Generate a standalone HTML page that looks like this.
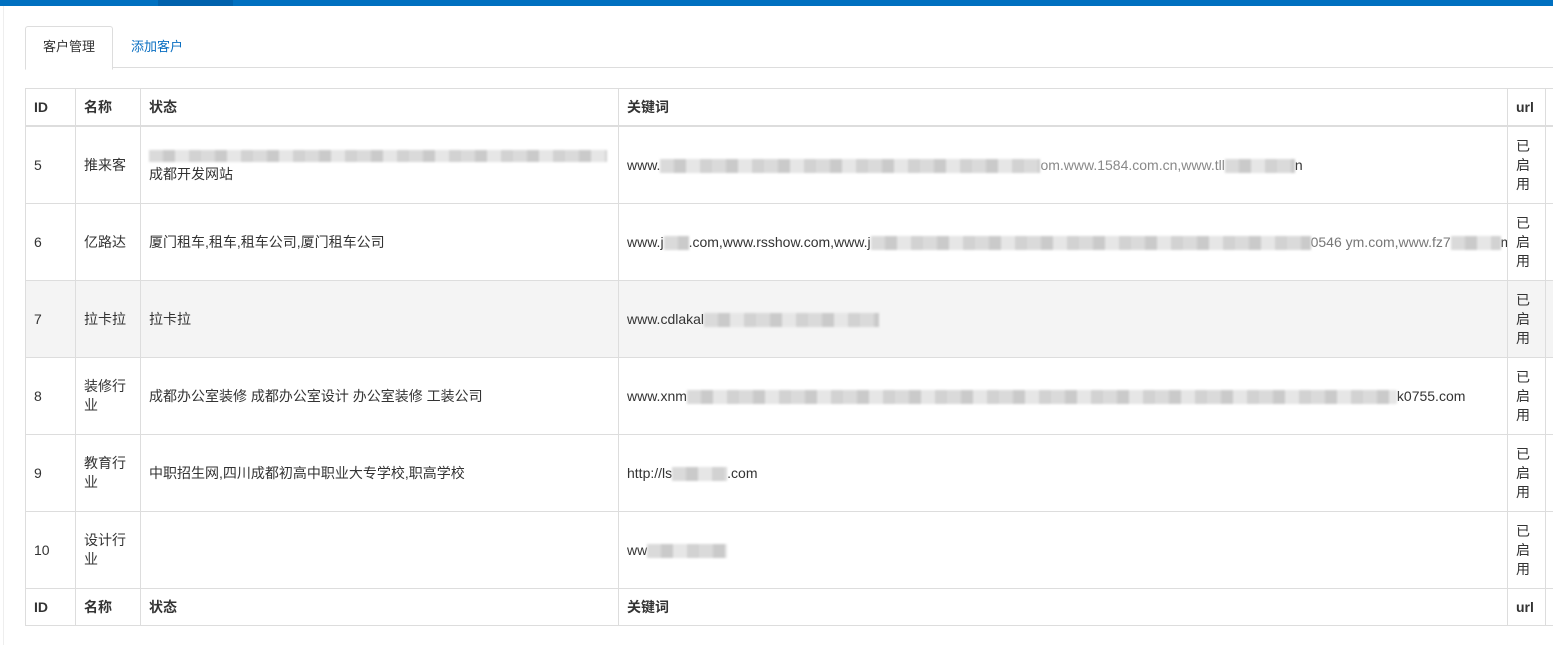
<!DOCTYPE html>
<html><head><meta charset="utf-8"><style>
html,body{margin:0;padding:0;width:1553px;height:645px;overflow:hidden;background:#fff;font-family:"Liberation Sans","Noto Sans CJK SC",sans-serif;font-size:14px;color:#333}
.top{position:absolute;left:0;top:0;width:1553px;height:6px;background:#0070c0}
.top i{position:absolute;left:158px;top:0;width:75px;height:6px;background:#0062ad}
.lline{position:absolute;left:3px;top:6px;width:1px;height:639px;background:#eee}
.tab{position:absolute;left:25px;top:26px;width:86px;height:42px;border:1px solid #ddd;border-bottom:1px solid #fff;border-radius:3px 3px 0 0;background:#fff;line-height:40px;text-align:center;z-index:2;font-size:13px}
.tab2{position:absolute;left:131px;top:26px;line-height:42px;color:#0a6fc2;font-size:13px}
.navline{position:absolute;left:25px;top:67px;width:1528px;height:1px;background:#ddd}
table{position:absolute;left:25px;top:88px;border-collapse:collapse;table-layout:fixed;width:1545px}
td,th{border:1px solid #ddd;padding:0 8px;text-align:left;vertical-align:middle;line-height:19px;overflow:hidden}
th{height:36px;font-weight:bold}
thead th{border-bottom:2px solid #ddd}
tbody td{height:76px}
tr.g td{background:#f4f4f4}
.b{display:inline-block;vertical-align:middle;height:14px;filter:blur(1px);background:repeating-linear-gradient(90deg,#dadada 0 14px,#cacaca 14px 26px,#e6e6e6 26px 40px,#d2d2d2 40px 52px)}
.w{white-space:nowrap}
</style></head><body>
<div class="top"><i></i></div>
<div class="lline"></div>
<div class="tab">客户管理</div>
<div class="tab2">添加客户</div>
<div class="navline"></div>
<table>
<colgroup><col style="width:50px"><col style="width:65px"><col style="width:478px"><col style="width:889px"><col style="width:38px"><col style="width:25px"></colgroup>
<thead><tr><th>ID</th><th>名称</th><th>状态</th><th>关键词</th><th>url</th><th></th></tr></thead>
<tbody>
<tr><td>5</td><td>推来客</td><td><span class="b" style="width:458px;height:12px"></span><br>成都开发网站</td><td class="w">www.<span class="b" style="width:380px"></span><span style="color:#888">om.www.1584.com.cn,www.tll</span><span class="b" style="width:70px"></span>n</td><td>已<br>启<br>用</td><td></td></tr>
<tr><td>6</td><td>亿路达</td><td>厦门租车,租车,租车公司,厦门租车公司</td><td class="w">www.j<span class="b" style="width:25px"></span>.com,www.rsshow.com,www.j<span class="b" style="width:440px"></span><span style="color:#777">0546 ym.com,www.fz7</span><span class="b" style="width:50px"></span>m</td><td>已<br>启<br>用</td><td></td></tr>
<tr class="g"><td>7</td><td>拉卡拉</td><td>拉卡拉</td><td class="w">www.cdlakal<span class="b" style="width:175px"></span></td><td>已<br>启<br>用</td><td></td></tr>
<tr><td>8</td><td>装修行业</td><td>成都办公室装修 成都办公室设计 办公室装修 工装公司</td><td class="w">www.xnm<span class="b" style="width:710px"></span>k0755.com</td><td>已<br>启<br>用</td><td></td></tr>
<tr><td>9</td><td>教育行业</td><td>中职招生网,四川成都初高中职业大专学校,职高学校</td><td class="w">http://ls<span class="b" style="width:55px"></span>.com</td><td>已<br>启<br>用</td><td></td></tr>
<tr><td>10</td><td>设计行业</td><td></td><td class="w">ww<span class="b" style="width:80px"></span></td><td>已<br>启<br>用</td><td></td></tr>
</tbody>
<tfoot><tr><th>ID</th><th>名称</th><th>状态</th><th>关键词</th><th>url</th><th></th></tr></tfoot>
</table>
</body></html>
